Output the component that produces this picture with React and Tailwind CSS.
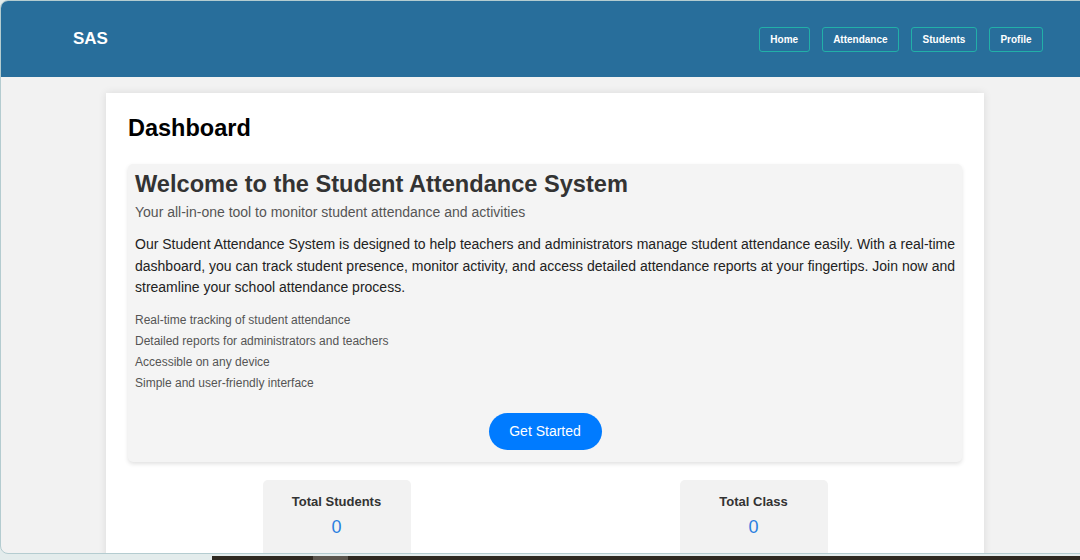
const navLinks = ["Home", "Attendance", "Students", "Profile"];

const features = [
  "Real-time tracking of student attendance",
  "Detailed reports for administrators and teachers",
  "Accessible on any device",
  "Simple and user-friendly interface",
];

const stats = [
  ["Total Students", 0],
  ["Total Class", 0],
];

function Header() {
  return (
    <header className="flex h-[76px] shrink-0 items-center justify-between bg-[#286e9b] pl-[72px] pr-[56px]">
      <p className="text-[17px] font-bold text-white">SAS</p>
      <nav className="flex items-center gap-[12px]">
        {navLinks.map((label) => (
          <a
            key={label}
            href="#"
            className="flex h-[25px] items-center rounded-[3px] border border-[#22b0a8] px-[10.5px] text-[10px] font-bold text-white"
          >
            {label}
          </a>
        ))}
      </nav>
    </header>
  );
}

function Hero() {
  return (
    <section className="rounded-[5px] bg-[#f4f4f4] px-[7px] pb-[12px] pt-[6px] shadow-[0_2px_4px_rgba(0,0,0,0.12)]">
      <h2 className="text-[23.6px] font-bold leading-[28px] text-[#333]">
        Welcome to the Student Attendance System
      </h2>
      <p className="mt-[4px] text-[14px] leading-[20px] text-[#555]">
        Your all-in-one tool to monitor student attendance and activities
      </p>
      <p className="mt-[12px] text-justify text-[14px] leading-[21.5px] text-[#222]">
        Our Student Attendance System is designed to help teachers and administrators manage student
        attendance easily. With a real-time dashboard, you can track student presence, monitor
        activity, and access detailed attendance reports at your fingertips. Join now and streamline
        your school attendance process.
      </p>
      <ul className="mt-[11px] text-[12px] leading-[21px] text-[#555]">
        {features.map((item) => (
          <li key={item}>{item}</li>
        ))}
      </ul>
      <div className="mt-[19px] flex justify-center">
        <button
          type="button"
          className="h-[37px] w-[113px] rounded-full bg-[#007bff] text-[14px] text-white"
        >
          Get Started
        </button>
      </div>
    </section>
  );
}

export default function App() {
  return (
    <div
      className="flex h-[560px] w-[1080px] flex-col overflow-hidden bg-[#e3ecec]"
      style={{ fontFamily: '"Liberation Sans", Arial, sans-serif' }}
    >
      <div className="flex h-[554px] w-[1100px] shrink-0 flex-col overflow-hidden rounded-[8px] border border-[#b4ccd0] bg-[#f2f2f2]">
        <Header />
        <main className="flex-1 overflow-hidden pl-[105px]">
          <div className="mt-[16px] h-[500px] w-[878px] bg-white px-[22px] pt-[21px] shadow-[0_0_8px_rgba(0,0,0,0.1)]">
            <h1 className="text-[23.5px] font-bold leading-[28px] text-black">Dashboard</h1>
            <div className="mt-[22px]">
              <Hero />
            </div>
            <div className="mt-[18px] grid grid-cols-2">
              {stats.map(([label, value]) => (
                <div key={label} className="flex justify-center">
                  <div className="h-[90px] w-[148px] rounded-[5px] bg-[#f2f2f2] pt-[13px] text-center">
                    <p className="text-[13px] font-bold leading-[18px] text-[#333]">{label}</p>
                    <p className="mt-[4px] text-[18px] leading-[24px] text-[#2a7fe0]">{value}</p>
                  </div>
                </div>
              ))}
            </div>
          </div>
        </main>
      </div>
      <div className="mt-[2px] flex flex-1">
        <div className="w-[212px]" />
        <div className="w-[101px] bg-[#2f2921]" />
        <div className="w-[35px] bg-[#5b554d]" />
        <div className="flex-1 bg-[#2f2921]" />
      </div>
    </div>
  );
}
